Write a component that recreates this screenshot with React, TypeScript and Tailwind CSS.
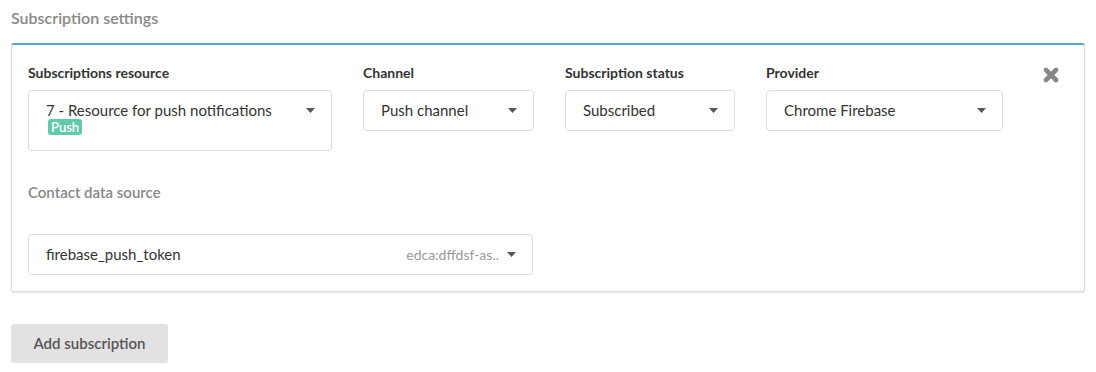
const FONT = { fontFamily: '"Source Sans Pro", Lato, "Noto Sans", sans-serif' };

function Caret() {
  return (
    <svg width="9" height="5" viewBox="0 0 9 5" className="shrink-0">
      <path d="M0 0h9L4.5 5z" fill="#555" />
    </svg>
  );
}

function Field({ label, width, value, badge }: { label: string; width: string; value: string; badge?: string }) {
  return (
    <div className={`flex flex-col ${width}`}>
      <div className="text-[14px] font-bold text-[#333] leading-[18px] mb-[8px]">{label}</div>
      <div
        className={`flex items-start justify-between border border-[#ddd] rounded-[4px] bg-white pl-[17px] pr-[16px] pt-[9px] min-h-[41px] ${
          badge ? "pb-[15px]" : "pb-[9px]"
        }`}
      >
        <div className="flex flex-col items-start">
          <span className="text-[15px] text-[#333] leading-[21px]">{value}</span>
          {badge && (
            <span className="bg-[#5fcbac] text-white text-[13px] font-semibold leading-[16px] rounded-[3px] px-[3px] mt-[-2px] ml-[2px]">
              {badge}
            </span>
          )}
        </div>
        <div className="pt-[8px]">
          <Caret />
        </div>
      </div>
    </div>
  );
}

export default function App() {
  return (
    <div className="bg-white w-[1096px] h-[372px] px-[11px] pt-[6px]" style={FONT}>
      <div className="text-[16px] font-semibold text-[#888] leading-[24px]">Subscription settings</div>

      <div className="mt-[13px] border border-[#ddd] border-t-2 border-t-[#5ba4cf] rounded-[3px] shadow-[0_1px_2px_rgba(0,0,0,0.12)] pl-[16px] pr-[16px] pt-[19px] pb-[16px]">
        <div className="flex items-start">
          <div className="flex gap-[31px]">
            <Field label="Subscriptions resource" width="w-[304px]" value="7 - Resource for push notifications" badge="Push" />
            <Field label="Channel" width="w-[171px]" value="Push channel" />
            <Field label="Subscription status" width="w-[170px]" value="Subscribed" />
            <Field label="Provider" width="w-[237px]" value="Chrome Firebase" />
          </div>
          <div className="ml-auto mr-[9px] mt-[3px]">
            <svg width="16" height="16" viewBox="0 0 16 16">
              <path d="M3 3L13 13M13 3L3 13" stroke="#888" strokeWidth="4.6" strokeLinecap="round" />
            </svg>
          </div>
        </div>

        <div className="mt-[30px] text-[15px] font-semibold text-[#888] leading-[22px]">Contact data source</div>

        <div className="mt-[31px] w-[505px] flex items-center justify-between border border-[#ddd] rounded-[4px] pl-[17px] pr-[16px] h-[41px]">
          <span className="text-[15px] text-[#333]">firebase_push_token</span>
          <div className="flex items-center gap-[8px]">
            <span className="text-[14px] text-[#999]">edca:dffdsf-as..</span>
            <Caret />
          </div>
        </div>
      </div>

      <button className="mt-[32px] w-[157px] h-[39px] bg-[#e2e2e2] rounded-[3px] text-[15px] font-semibold text-[#555]">
        Add subscription
      </button>
    </div>
  );
}
